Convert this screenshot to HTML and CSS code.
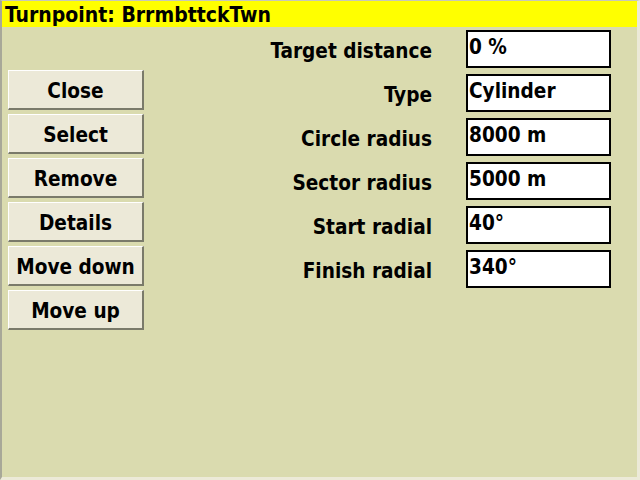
FILE: index.html
```html
<!DOCTYPE html>
<html>
<head>
<meta charset="utf-8">
<link rel="stylesheet" href="styles.css">
</head>
<body>
<div class="window">
  <div class="titlebar">Turnpoint: BrrmbttckTwn</div>
  <div class="content">
    <div class="buttons">
      <div class="btn">Close</div>
      <div class="btn">Select</div>
      <div class="btn">Remove</div>
      <div class="btn">Details</div>
      <div class="btn">Move down</div>
      <div class="btn">Move up</div>
    </div>
    <div class="form">
      <div class="label">Target distance</div><div class="field">0 %</div>
      <div class="label">Type</div><div class="field">Cylinder</div>
      <div class="label">Circle radius</div><div class="field">8000 m</div>
      <div class="label">Sector radius</div><div class="field">5000 m</div>
      <div class="label">Start radial</div><div class="field">40°</div>
      <div class="label">Finish radial</div><div class="field">340°</div>
    </div>
  </div>
</div>
</body>
</html>
```
FILE: styles.css
```css
html, body {
  margin: 0;
  padding: 0;
}
body {
  width: 640px;
  height: 480px;
  overflow: hidden;
  font-family: "DejaVu Sans Condensed", "DejaVu Sans", Verdana, sans-serif;
  font-stretch: condensed;
  font-weight: bold;
  color: #000;
}
.window {
  box-sizing: border-box;
  width: 640px;
  height: 480px;
  background: #dadbaf;
  border-left: 2px solid #a8a898;
  border-top: 1px solid #c8c8b8;
  border-right: 3px solid #ecead8;
  border-bottom: 3px solid #ecead8;
  display: flex;
  flex-direction: column;
}
.titlebar {
  background: #ffff00;
  height: 26px;
  line-height: 28px;
  padding-left: 3px;
  font-size: 21px;
  white-space: nowrap;
}
.content {
  display: flex;
  flex: 1;
}
.buttons {
  display: flex;
  flex-direction: column;
  gap: 4px;
  padding-top: 43px;
  padding-left: 6px;
}
.btn {
  box-sizing: border-box;
  width: 136px;
  height: 40px;
  background: #ece9d8;
  border-top: 1px solid #ffffff;
  border-left: 1px solid #ffffff;
  border-right: 2px solid #7a7a6a;
  border-bottom: 2px solid #7a7a6a;
  display: flex;
  align-items: center;
  justify-content: center;
  font-size: 20.6px;
  padding-top: 2px;
}
.form {
  display: grid;
  grid-template-columns: 288px 145px;
  column-gap: 34px;
  row-gap: 6px;
  padding-top: 3px;
  align-content: start;
}
.label {
  height: 38px;
  display: flex;
  align-items: center;
  justify-content: flex-end;
  font-size: 20.6px;
  white-space: nowrap;
  padding-top: 3px;
  box-sizing: border-box;
}
.field {
  box-sizing: border-box;
  height: 38px;
  background: #ffffff;
  border: 2px solid #000000;
  padding: 3px 0 0 1px;
  font-size: 20.6px;
  line-height: 24px;
  white-space: nowrap;
}
```
